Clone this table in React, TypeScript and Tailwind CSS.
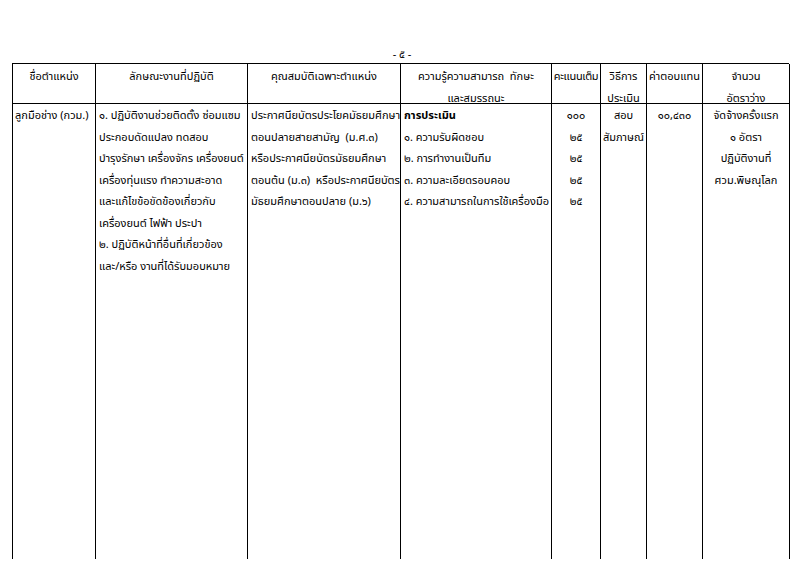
const col2 = [
  "๑. ปฏิบัติงานช่วยติดตั้ง ซ่อมแซม",
  "ประกอบดัดแปลง ทดสอบ",
  "บำรุงรักษา เครื่องจักร เครื่องยนต์",
  "เครื่องทุ่นแรง ทำความสะอาด",
  "และแก้ไขข้อขัดข้องเกี่ยวกับ",
  "เครื่องยนต์ ไฟฟ้า ประปา",
  "๒. ปฏิบัติหน้าที่อื่นที่เกี่ยวข้อง",
  "และ/หรือ งานที่ได้รับมอบหมาย",
]

const col3 = [
  "ประกาศนียบัตรประโยคมัธยมศึกษา",
  "ตอนปลายสายสามัญ  (ม.ศ.๓)",
  "หรือประกาศนียบัตรมัธยมศึกษา",
  "ตอนต้น (ม.๓)  หรือประกาศนียบัตร",
  "มัธยมศึกษาตอนปลาย (ม.๖)",
]

const col4 = [
  "๑. ความรับผิดชอบ",
  "๒. การทำงานเป็นทีม",
  "๓. ความละเอียดรอบคอบ",
  "๔. ความสามารถในการใช้เครื่องมือ",
]

function Lines({ items, center }: { items: string[]; center?: boolean }) {
  return (
    <>
      {items.map((t, i) => (
        <div key={i} className={"whitespace-pre " + (center ? "text-center" : "")}>
          {t}
        </div>
      ))}
    </>
  )
}

export default function App() {
  return (
    <div
      className="w-[800px] h-[577px] bg-white text-black overflow-hidden pt-[46px] text-[11px]"
      style={{ fontFamily: '"Noto Sans Thai", "Noto Sans", "DejaVu Sans", sans-serif' }}
    >
      <div className="text-center leading-[17px] ml-[4px]">- ๕ -</div>

      <div className="ml-[12px] w-[777px] border-t border-l border-black">
        {/* header */}
        <div className="grid grid-cols-[83px_152px_153px_151px_49px_46px_56px_87px] h-[40px] border-b border-black leading-[22px] text-center pt-[2px]">
          <div className="border-r border-black -mt-[2px] pt-[2px]">ชื่อตำแหน่ง</div>
          <div className="border-r border-black -mt-[2px] pt-[2px]">ลักษณะงานที่ปฏิบัติ</div>
          <div className="border-r border-black -mt-[2px] pt-[2px]">คุณสมบัติเฉพาะตำแหน่ง</div>
          <div className="border-r border-black -mt-[2px] pt-[2px]">
            <div className="whitespace-pre">ความรู้ความสามารถ  ทักษะ</div>
            <div>และสมรรถนะ</div>
          </div>
          <div className="border-r border-black -mt-[2px] pt-[2px] whitespace-nowrap tracking-[-0.3px]">คะแนนเต็ม</div>
          <div className="border-r border-black -mt-[2px] pt-[2px]">
            <div>วิธีการ</div>
            <div>ประเมิน</div>
          </div>
          <div className="border-r border-black -mt-[2px] pt-[2px] whitespace-nowrap">ค่าตอบแทน</div>
          <div className="border-r border-black -mt-[2px] pt-[2px]">
            <div>จำนวน</div>
            <div>อัตราว่าง</div>
          </div>
        </div>

        {/* body */}
        <div className="grid grid-cols-[83px_152px_153px_151px_49px_46px_56px_87px] h-[455px] leading-[21.5px] pt-[1px]">
          <div className="border-r border-black pl-[2px] whitespace-nowrap">ลูกมือช่าง (กวม.)</div>
          <div className="border-r border-black pl-[3px]">
            <Lines items={col2} />
          </div>
          <div className="border-r border-black pl-[3px]">
            <Lines items={col3} />
          </div>
          <div className="border-r border-black pl-[3px]">
            <div className="font-bold">การประเมิน</div>
            <Lines items={col4} />
          </div>
          <div className="border-r border-black">
            <Lines items={["๑๐๐", "๒๕", "๒๕", "๒๕", "๒๕"]} center />
          </div>
          <div className="border-r border-black">
            <Lines items={["สอบ", "สัมภาษณ์"]} center />
          </div>
          <div className="border-r border-black">
            <Lines items={["๑๐,๔๓๐"]} center />
          </div>
          <div className="border-r border-black">
            <Lines items={["จัดจ้างครั้งแรก", "๑ อัตรา", "ปฏิบัติงานที่", "ศวม.พิษณุโลก"]} center />
          </div>
        </div>
      </div>
    </div>
  )
}
